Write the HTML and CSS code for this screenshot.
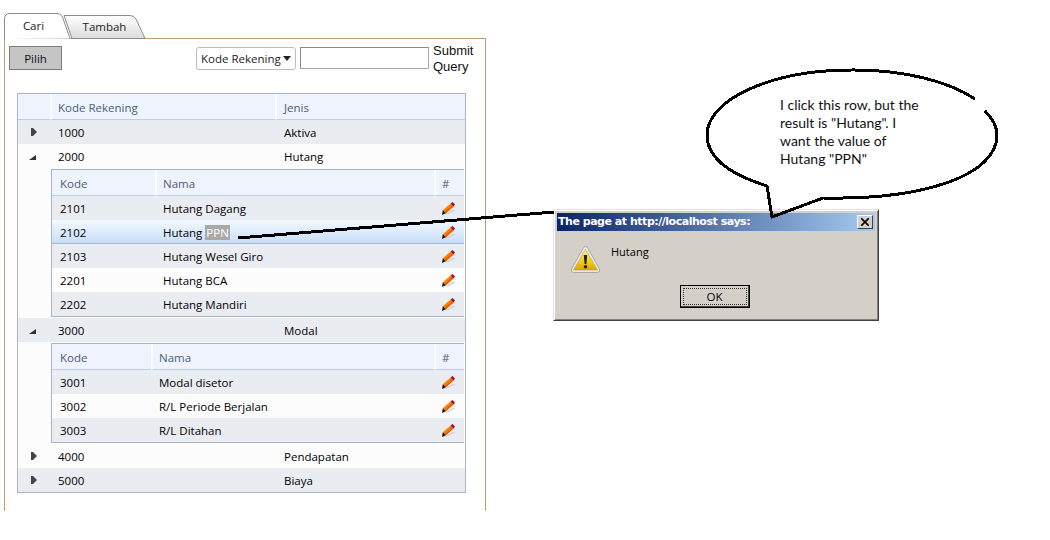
FILE: index.html
```html
<!DOCTYPE html>
<html lang="id">
<head>
<meta charset="utf-8">
<title>Kode Rekening</title>
<link rel="stylesheet" href="styles.css">
</head>
<body>
<svg class="defs" width="0" height="0" aria-hidden="true">
  <symbol id="pencil" viewBox="0 0 13 13">
    <path d="M3 12.5 L12 7.5 L13 8.5 L6 12.5z" fill="#cfcfcf"/>
    <path d="M.8 8.2 L8.5 1.5 L11.5 4.5 L3.8 11.2z" fill="#ff8000"/>
    <path d="M2.5 10 L10 3 L11.5 4.5 L3.8 11.2z" fill="#e85f00"/>
    <path d="M8.5 1.5 L10.5 0 L13 2.5 L11.5 4.5z" fill="#a50f1e"/>
    <path d="M.8 8.2 L3.8 11.2 L0 13z" fill="#111"/>
  </symbol>
  <symbol id="arrow-right" viewBox="0 0 6 8">
    <path d="M0 0 H2 L6 4 L2 8 H0z" fill="#444"/>
  </symbol>
  <symbol id="arrow-down" viewBox="0 0 7 5">
    <path d="M7 0 V5 H0z" fill="#333"/>
  </symbol>
</svg>

<div class="stage">
  <div class="tabs">
    <div class="tab tab-active">
      <svg class="tab-shape" width="67" height="26" viewBox="0 0 67 26"><path d="M.5 26 V6 Q.5 .5 6 .5 H53 Q57 .5 58.5 4 L66 25.5" fill="#fff" stroke="#8c8c8c"/></svg>
      <span class="tab-label">Cari</span>
    </div>
    <div class="tab tab-idle">
      <svg class="tab-shape" width="82" height="24" viewBox="0 0 82 24"><defs><linearGradient id="tabfill" x1="0" y1="0" x2="0" y2="1"><stop offset="0" stop-color="#fff"/><stop offset="1" stop-color="#dcdcdc"/></linearGradient></defs><path d="M0 .5 H66 Q70 .5 72 4 L81 23.5 H8z" fill="url(#tabfill)" stroke="#8c8c8c"/></svg>
      <span class="tab-label">Tambah</span>
    </div>
  </div>

  <div class="panel">
    <div class="toolbar">
      <button class="btn-pilih" type="button">Pilih</button>
      <div class="search">
        <span class="select">Kode Rekening</span>
        <input class="search-input" type="text">
        <span class="submit">Submit Query</span>
      </div>
    </div>

    <table class="tree">
      <colgroup><col class="c-exp"><col class="c-kode"><col class="c-jenis"></colgroup>
      <thead>
        <tr><th></th><th>Kode Rekening</th><th>Jenis</th></tr>
      </thead>
      <tbody>
        <tr class="alt"><td class="exp"><svg class="ar" width="6" height="8"><use href="#arrow-right"/></svg></td><td>1000</td><td>Aktiva</td></tr>
        <tr><td class="exp"><svg class="ad" width="7" height="5"><use href="#arrow-down"/></svg></td><td>2000</td><td>Hutang</td></tr>
        <tr>
          <td></td>
          <td class="detail" colspan="2">
            <table class="sub sub-a">
              <colgroup><col class="s-kode"><col><col class="s-act"></colgroup>
              <thead><tr><th>Kode</th><th>Nama</th><th>#</th></tr></thead>
              <tbody>
                <tr class="alt"><td>2101</td><td>Hutang Dagang</td><td><svg class="pen"><use href="#pencil"/></svg></td></tr>
                <tr class="hl"><td>2102</td><td>Hutang <span class="sel">PPN</span></td><td><svg class="pen"><use href="#pencil"/></svg></td></tr>
                <tr class="alt"><td>2103</td><td>Hutang Wesel Giro</td><td><svg class="pen"><use href="#pencil"/></svg></td></tr>
                <tr><td>2201</td><td>Hutang BCA</td><td><svg class="pen"><use href="#pencil"/></svg></td></tr>
                <tr class="alt"><td>2202</td><td>Hutang Mandiri</td><td><svg class="pen"><use href="#pencil"/></svg></td></tr>
              </tbody>
            </table>
          </td>
        </tr>
        <tr class="alt"><td class="exp"><svg class="ad" width="7" height="5"><use href="#arrow-down"/></svg></td><td>3000</td><td>Modal</td></tr>
        <tr>
          <td></td>
          <td class="detail" colspan="2">
            <table class="sub sub-b">
              <colgroup><col class="s-kode"><col><col class="s-act"></colgroup>
              <thead><tr><th>Kode</th><th>Nama</th><th>#</th></tr></thead>
              <tbody>
                <tr class="alt"><td>3001</td><td>Modal disetor</td><td><svg class="pen"><use href="#pencil"/></svg></td></tr>
                <tr><td>3002</td><td>R/L Periode Berjalan</td><td><svg class="pen"><use href="#pencil"/></svg></td></tr>
                <tr class="alt"><td>3003</td><td>R/L Ditahan</td><td><svg class="pen"><use href="#pencil"/></svg></td></tr>
              </tbody>
            </table>
          </td>
        </tr>
        <tr><td class="exp"><svg class="ar" width="6" height="8"><use href="#arrow-right"/></svg></td><td>4000</td><td>Pendapatan</td></tr>
        <tr class="alt"><td class="exp"><svg class="ar" width="6" height="8"><use href="#arrow-right"/></svg></td><td>5000</td><td>Biaya</td></tr>
      </tbody>
    </table>
  </div>

  <div class="dialog">
    <div class="dialog-title">
      <span>The page at http://localhost says:</span>
      <span class="dialog-close">
        <svg width="8" height="8" viewBox="0 0 8 8"><path d="M0 0 L8 8 M8 0 L0 8" stroke="#000" stroke-width="1.6"/></svg>
      </span>
    </div>
    <div class="dialog-body">
      <svg class="warn" width="31" height="29" viewBox="0 0 31 29">
        <defs><linearGradient id="warnfill" x1="0" y1="0" x2="0" y2="1"><stop offset="0" stop-color="#fdf29a"/><stop offset=".6" stop-color="#f2ca1c"/><stop offset="1" stop-color="#d9a50a"/></linearGradient></defs>
        <path d="M15.5 1.5 Q17 1.5 18 3.5 L29.5 24 Q30.5 27.5 27.5 27.5 H3.5 Q.5 27.5 1.5 24 L13 3.5 Q14 1.5 15.5 1.5z" fill="#e8e8e8" stroke="#a9a9a9"/>
        <path d="M15.5 4.5 L27.5 25 H3.5z" fill="url(#warnfill)" stroke="#c9a11a" stroke-width=".6"/>
        <path d="M13.8 10 H17.2 L16.4 19 H14.6z" fill="#222"/>
        <circle cx="15.5" cy="21.8" r="1.8" fill="#222"/>
      </svg>
      <span class="dialog-msg">Hutang</span>
    </div>
    <div class="dialog-actions">
      <button class="btn-ok" type="button"><span class="btn-ok-in">OK</span></button>
    </div>
  </div>

  <svg class="annot" width="1050" height="540" viewBox="0 0 1050 540" aria-hidden="true">
    <path d="M238 238 L554 212" fill="none" stroke="#000" stroke-width="3"/>
    <path d="M975 99 A145 65 0 0 0 852 70 A145 65 0 0 0 707 135 C707 160 735 176 767 186 L772 217 L823 198 C925 200 997 175 997 135 C997 125 992 118 985 111" fill="none" stroke="#000" stroke-width="3"/>
  </svg>
  <p class="callout">I click this row, but the<br>result is "Hutang". I<br>want the value of<br>Hutang "PPN"</p>
</div>
</body>
</html>
```
FILE: styles.css
```css
* { box-sizing: border-box; }
html, body { margin: 0; padding: 0; background: #fff; }
body { font: 11.5px/16px "Open Sans", "Liberation Sans", sans-serif; color: #000; overflow: hidden; }
.defs { position: absolute; }

.stage { position: relative; width: 1050px; height: 540px; padding: 13px 0 0 4px; overflow: hidden; }

/* tabs */
.tabs { display: flex; height: 25px; }
.tab { position: relative; display: flex; justify-content: center; align-items: center; }
.tab-active { width: 60px; z-index: 2; height: 26px; padding-right: 1px; }
.tab-idle { width: 81px; margin-top: 2px; height: 23px; }
.tab-shape { position: absolute; left: 0; top: 0; overflow: visible; }
.tab-label { position: relative; color: #222; }

/* panel */
.panel { width: 482px; height: 473px; border: 1px solid #bf9b6f; border-bottom: 0; padding: 7px 10px 0 4px; background: #fff; }
.toolbar { display: flex; justify-content: space-between; align-items: flex-start; height: 24px; }
.btn-pilih { width: 53px; height: 24px; padding: 1px 0 0; border: 1px solid #7c7c7c; background: #c5c5c5; font: inherit; color: #111; }
.search { display: flex; align-items: flex-start; gap: 4px; }
.select { position: relative; display: flex; align-items: center; width: 100px; height: 23px; margin-top: 1px; padding-left: 4px; border: 1px solid #bdbdbd; border-radius: 3px; color: #222; background: #fff; }
.select::after { content: ""; position: absolute; right: 4px; top: 8px; border: 4px solid transparent; border-top: 5px solid #222; border-bottom: 0; }
.search-input { width: 129px; height: 22px; margin: 1px 0 0; padding: 0 2px; border: 1px solid #a9a9a9; border-top-color: #8a8a8a; border-left-color: #8a8a8a; background: #fff; }
.submit { width: 42px; margin-top: -3px; font: 13px/16px "Liberation Sans", Arial, sans-serif; color: #111; }

/* tree grid */
.tree { width: 449px; margin: 23px 0 0 8px; table-layout: fixed; border-collapse: separate; border-spacing: 0; border: 1px solid #a9b5c9; background: #fcfcfc; }
.c-exp { width: 32px; }
.c-kode { width: 225px; }
.tree th, .tree td { padding: 2px 8px 0; text-align: left; font-weight: 400; white-space: nowrap; }
.tree th { height: 26px; color: #4c5d78; background: #eff3fb; border-bottom: 1px solid #c3cfe0; }
.tree th + th { padding-left: 6px; border-left: 2px solid #fbfcfe; }
.tree th + th + th { padding-left: 7px; }
.tree td { height: 24px; }
.tree tbody > tr > td:nth-child(3) { padding-left: 9px; }
.tree .alt > td { background: #e9ecf1; }
.tree td.exp { padding: 0; text-align: center; line-height: 0; }
.ar { margin-left: -1px; }
.ad { margin-left: -3px; margin-top: 3px; }

.tree td.detail { padding: 1px; background: #fcfcfc; height: auto; }
.sub { width: 413px; table-layout: fixed; border-collapse: separate; border-spacing: 0; border: 1px solid #a9b5c9; border-right: 0; }
.sub-a .s-kode { width: 103px; }
.sub-b .s-kode { width: 99px; }
.s-act { width: 30px; }
.tree .sub th, .tree .sub td { padding: 2px 8px 0; }
.tree .sub th + th { padding-left: 6px; }
.tree .sub th:nth-child(3) { padding-left: 6px; }
.tree .sub td:nth-child(3) { padding-left: 8px; }
.tree .sub .hl > td { background: linear-gradient(#f3f9ff, #c8def8); border-bottom: 1px solid #a0b9d9; }
.sel { background: #a9a9a9; color: #fff; padding: 0 1px; }
.pen { display: block; width: 13px; height: 13px; margin-top: -1px; }

/* alert dialog */
.dialog { position: absolute; left: 553px; top: 209px; width: 326px; height: 112px; padding: 3px; background: #d4d0c8; border: 1px solid; border-color: #e6e3dd #404040 #404040 #e6e3dd; box-shadow: inset 1px 1px 0 #fff, inset -1px -1px 0 #808080; font-family: "Liberation Sans", Arial, sans-serif; }
.dialog-title { display: flex; justify-content: space-between; align-items: center; height: 18px; padding: 0 2px 0 1px; color: #fff; font: 700 11px/18px "DejaVu Sans", Verdana, sans-serif; letter-spacing: -.47px; background: linear-gradient(90deg, #0a246a, #a6caf0); }
.dialog-close { display: flex; align-items: center; justify-content: center; width: 16px; height: 14px; background: #d4d0c8; border: 1px solid; border-color: #fff #404040 #404040 #fff; }
.dialog-body { display: flex; align-items: flex-start; height: 54px; padding: 14px 0 0 13px; }
.warn { display: block; }
.dialog-msg { margin: -1px 0 0 10px; font: 11px/16px "Open Sans", sans-serif; }
.dialog-actions { display: flex; justify-content: center; padding-right: 3px; }
.btn-ok { display: block; width: 70px; height: 23px; padding: 2px; border: 1px solid #000; box-shadow: inset -1px -1px 0 #404040; background: #d4d0c8; }
.btn-ok-in { display: flex; align-items: center; justify-content: center; height: 100%; border: 1px dotted #333; font: 11.5px/15px "Open Sans", sans-serif; color: #000; }

/* hand-drawn annotation */
.annot { position: absolute; left: 0; top: 0; pointer-events: none; shape-rendering: crispEdges; }
.callout { position: absolute; left: 780px; top: 96px; margin: 0; font: 14px/18px Lato, "Open Sans", sans-serif; color: #111; white-space: nowrap; }
```
